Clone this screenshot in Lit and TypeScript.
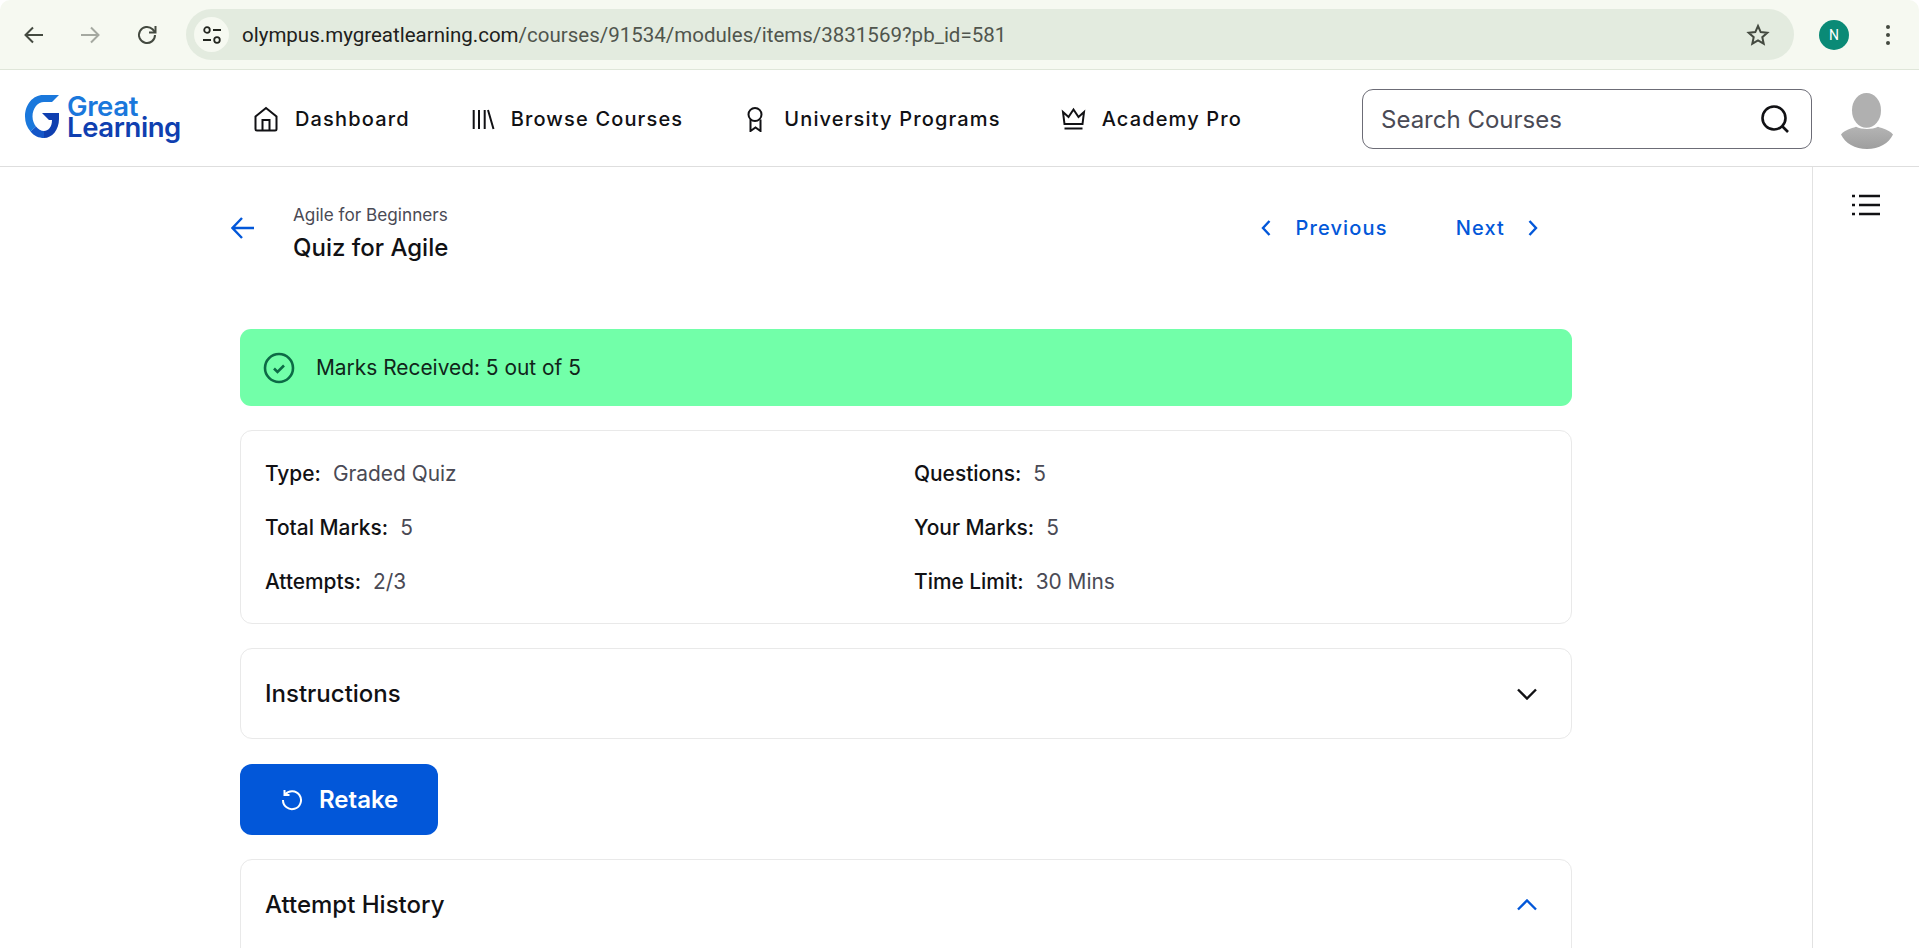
import { LitElement, html, css, svg } from 'lit';
import { customElement } from 'lit/decorators.js';

const navItems = [
  {
    label: 'Dashboard',
    icon: svg`<path d="M1.500 10.500 12 2l10.500 8.500V23a1.500 1.500 0 0 1-1.500 1.500H3A1.500 1.500 0 0 1 1.500 23z" /><path d="M8.500 24.500V14h7v10.500" />`,
  },
  {
    label: 'Browse Courses',
    icon: svg`<path d="M3.700 4v19M9 4v19M14.700 4v19M18 4l5.500 19" />`,
  },
  {
    label: 'University Programs',
    icon: svg`<circle cx="12" cy="8.500" r="6.500" /><path d="M7.500 13.500V25l5-3.500 5 3.500V13.500" />`,
  },
  {
    label: 'Academy Pro',
    icon: svg`<path d="M2 6l5.500 5 5-7.500 5 7.500 5.500-5-1.500 12H3.500z" /><path d="M3.500 22.500h18" />`,
  },
];

const rows = [
  ['Type:', 'Graded Quiz', 'Questions:', '5'],
  ['Total Marks:', '5', 'Your Marks:', '5'],
  ['Attempts:', '2/3', 'Time Limit:', '30 Mins'],
];

@customElement('app-root')
export class AppRoot extends LitElement {
  static styles = css`
    :host {
      display: block;
      height: 948px;
      overflow: hidden;
      background: #fff;
      font-family: 'Inter', sans-serif;
      color: #111114;
    }
    svg {
      display: block;
      fill: none;
      stroke: currentColor;
      flex: none;
    }
    svg.solid {
      stroke: none;
    }

    /* browser chrome */
    .toolbar {
      height: 70px;
      box-sizing: border-box;
      background: #f6f9f1;
      border-bottom: 1px solid #dfe6d9;
      border-radius: 10px 10px 0 0;
      display: flex;
      align-items: center;
      padding-left: 21.5px;
    }
    .tool {
      width: 24px;
      height: 24px;
      margin-right: 32px;
      color: #444a40;
      stroke-width: 2;
    }
    .tool.off {
      color: #a5a9a1;
      margin-right: 33px;
    }
    .tool.last {
      margin-right: 27.5px;
    }
    .pill {
      width: 1608px;
      height: 51px;
      box-sizing: border-box;
      border-radius: 26px;
      background: #e3ebdf;
      display: flex;
      align-items: center;
      padding: 0 24px 0 8px;
    }
    .tune {
      width: 35px;
      height: 35px;
      border-radius: 50%;
      background: #f6f9f1;
      display: flex;
      align-items: center;
      justify-content: center;
      margin-right: 13px;
      color: #23261f;
    }
    .url {
      flex: 1;
      font-family: 'Roboto', sans-serif;
      font-size: 20.5px;
      color: #50554d;
      white-space: nowrap;
    }
    .url b {
      font-weight: 400;
      color: #1e211c;
    }
    .star {
      color: #444a40;
    }
    .account {
      width: 30px;
      height: 30px;
      border-radius: 50%;
      background: #0a8a76;
      color: #fff;
      font-family: 'Roboto', sans-serif;
      font-size: 14px;
      display: flex;
      align-items: center;
      justify-content: center;
      margin-left: 25px;
    }
    .dots {
      display: flex;
      flex-direction: column;
      gap: 4px;
      margin-left: 37px;
    }
    .dots i {
      width: 4px;
      height: 4px;
      border-radius: 50%;
      background: #444a40;
    }

    /* site header */
    .header {
      height: 97px;
      box-sizing: border-box;
      border-bottom: 1px solid #dedede;
      display: flex;
      align-items: center;
      padding: 2px 0 0 25px;
    }
    .logo {
      display: flex;
      align-items: flex-start;
      gap: 8px;
      width: 229px;
      height: 48px;
    }
    .logo-text {
      font-weight: 600;
      font-size: 27.5px;
      line-height: 21px;
      letter-spacing: -0.4px;
      color: #0f3fb0;
      padding-top: 1px;
    }
    .logo-text span {
      display: block;
      color: #1a78dc;
    }
    .nav {
      display: flex;
      align-items: center;
    }
    .nav-item {
      display: flex;
      align-items: center;
      gap: 16px;
      margin-right: 60px;
      font-size: 20px;
      font-weight: 500;
      letter-spacing: 1.15px;
      white-space: nowrap;
    }
    .nav-item svg {
      width: 25px;
      height: 26px;
      stroke-width: 2;
    }
    .search {
      margin-left: auto;
      width: 450px;
      height: 60px;
      box-sizing: border-box;
      border: 1px solid #6c6c76;
      border-radius: 11px;
      display: flex;
      align-items: center;
      justify-content: space-between;
      padding: 0 21px 0 18px;
      font-size: 24px;
      color: #4a4a55;
    }
    .search svg {
      color: #111114;
      stroke-width: 2.6;
    }
    .avatar {
      margin: 4px 26px 0 29px;
    }

    /* body */
    .layout {
      display: flex;
      height: 781px;
    }
    .main {
      flex: none;
      width: 1813px;
      box-sizing: border-box;
      padding: 0 240px;
      border-right: 1px solid #e2e2e2;
    }
    .side {
      flex: 1;
      display: flex;
      justify-content: center;
      padding-top: 27px;
    }
    .top {
      height: 162px;
      display: flex;
      align-items: flex-start;
      padding-top: 37px;
      box-sizing: border-box;
    }
    .back {
      color: #0257d9;
      margin: 12px 0 0 -9px;
      stroke-width: 2.4;
    }
    .crumbs {
      margin-left: 38px;
    }
    .crumb {
      font-size: 17.2px;
      line-height: 22px;
      color: #4a4a55;
    }
    .title {
      font-size: 24px;
      font-weight: 500;
      line-height: 28px;
      margin-top: 8px;
    }
    .pager {
      margin: 12px 33px 0 auto;
      display: flex;
      align-items: center;
      color: #0257d9;
      font-size: 20px;
      line-height: 24px;
      font-weight: 500;
      letter-spacing: 1.15px;
    }
    .pager svg {
      stroke-width: 2.4;
    }
    .prev-text {
      margin: 0 68px 0 23px;
    }
    .next-text {
      margin-right: 22px;
    }
    .banner {
      height: 77px;
      box-sizing: border-box;
      background: #72ffa9;
      border-radius: 11px;
      display: flex;
      align-items: center;
      padding-left: 23px;
      gap: 21px;
      font-size: 20.9px;
      color: #10251a;
    }
    .banner svg {
      color: #0d6a46;
      stroke-width: 2.6;
    }
    .card {
      border: 1px solid #e9e9e9;
      border-radius: 12px;
      box-sizing: border-box;
    }
    .info {
      height: 194px;
      margin-top: 24px;
      padding: 15px 20px 15px 24px;
      display: grid;
      grid-template-columns: 649px 1fr;
      grid-auto-rows: 54px;
      align-items: center;
      font-size: 20.9px;
      color: #4a4a55;
    }
    .info strong {
      font-weight: 500;
      color: #111114;
      margin-right: 12px;
    }
    .accordion-head {
      height: 89px;
      display: flex;
      align-items: center;
      justify-content: space-between;
      padding: 0 34px 0 24px;
      font-size: 24px;
      font-weight: 500;
    }
    .instructions {
      margin-top: 24px;
    }
    .retake {
      margin-top: 25px;
      width: 198px;
      height: 71px;
      box-sizing: border-box;
      background: #0257d9;
      border-radius: 12px;
      color: #fff;
      display: flex;
      align-items: center;
      padding-left: 41px;
      gap: 16px;
      font-size: 24px;
      font-weight: 600;
    }
    .retake svg {
      stroke-width: 2;
    }
    .history {
      height: 200px;
      margin-top: 24px;
    }
    .history svg {
      color: #0257d9;
    }
  `;

  render() {
    return html`
      <div class="toolbar">
        <svg class="tool" viewBox="0 0 24 24"><path d="M21 12H4M11 4.500 3.500 12l7.500 7.500" /></svg>
        <svg class="tool off" viewBox="0 0 24 24"><path d="M3 12h17M13 4.500l7.500 7.500-7.500 7.500" /></svg>
        <svg class="tool last" viewBox="0 0 24 24">
          <path d="M20 12a8 8 0 1 1-2.400-5.700L20 9" /><path d="M20.500 3v6.500H14" />
        </svg>
        <div class="pill">
          <div class="tune">
            <svg width="20" height="20" viewBox="0 0 20 20" stroke-width="1.800">
              <circle cx="5" cy="5" r="2.800" /><path d="M11 5h8M1 15h8" /><circle cx="15" cy="15" r="2.800" />
            </svg>
          </div>
          <div class="url"><b>olympus.mygreatlearning.com</b>/courses/91534/modules/items/3831569?pb_id=581</div>
          <svg class="star" width="24" height="24" viewBox="0 0 24 24" stroke-width="2">
            <path d="M12 3l2.700 6.100 6.600.7-5 4.400 1.400 6.500L12 17.400l-5.700 3.300 1.400-6.500-5-4.400 6.600-.7z" />
          </svg>
        </div>
        <div class="account">N</div>
        <div class="dots"><i></i><i></i><i></i></div>
      </div>

      <header class="header">
        <div class="logo">
          <svg class="solid" width="34" height="43" viewBox="0 0 34 43">
            <path fill="#1a78dc" d="M18 0H34L27 7H19C13 7 7.500 13 7.500 21.500 7.500 25.500 9 29 11 31.500L5.500 36.500C2 32.500 0 27.500 0 21.500 0 9.500 8 0 18 0z" />
            <path fill="#1456c8" d="M5.500 36.500 11 31.500C13 34 16 36 19 36V43C14 43 9 41 5.500 36.500z" />
            <path fill="#0f3fb0" d="M17 18H34V24C34 35 27 43 19 43V36C23 36 27 32.500 27 25H24z" />
          </svg>
          <div class="logo-text"><span>Great</span>Learning</div>
        </div>
        <nav class="nav">
          ${navItems.map(
            (n) => html`<div class="nav-item"><svg viewBox="0 0 25 26">${n.icon}</svg>${n.label}</div>`
          )}
        </nav>
        <div class="search">
          Search Courses
          <svg width="30" height="30" viewBox="0 0 30 30">
            <circle cx="14" cy="14" r="11.500" /><path d="M22 22l6 6" />
          </svg>
        </div>
        <svg class="avatar solid" width="52" height="56" viewBox="0 0 52 58" preserveAspectRatio="none">
          <defs>
            <linearGradient id="av" x1="0" y1="0" x2="0" y2="1">
              <stop offset="0" stop-color="#b4b4b4" /><stop offset="1" stop-color="#9e9e9e" />
            </linearGradient>
          </defs>
          <ellipse cx="25.500" cy="18" rx="14.500" ry="18" fill="#b0b0b0" />
          <path fill="url(#av)" d="M15 35c-5 2-11 3-15 8 4 9 14 15 26 15s22-6 26-15c-4-5-10-6-15-8-6 3-16 3-22 0z" />
        </svg>
      </header>

      <div class="layout">
        <div class="main">
          <div class="top">
            <svg class="back" width="24" height="24" viewBox="0 0 24 24">
              <path d="M23 12H2M11 2 1.500 12 11 22" />
            </svg>
            <div class="crumbs">
              <div class="crumb">Agile for Beginners</div>
              <div class="title">Quiz for Agile</div>
            </div>
            <div class="pager">
              <svg width="12" height="18" viewBox="0 0 12 18"><path d="M9.500 2 3 9l6.500 7" /></svg>
              <span class="prev-text">Previous</span>
              <span class="next-text">Next</span>
              <svg width="12" height="18" viewBox="0 0 12 18"><path d="M2.500 2 9 9l-6.500 7" /></svg>
            </div>
          </div>

          <div class="banner">
            <svg width="32" height="32" viewBox="0 0 32 32">
              <circle cx="16" cy="16" r="14" /><path d="M11 16.500l3.500 3.500 6.500-6.500" />
            </svg>
            Marks Received: 5 out of 5
          </div>

          <div class="card info">
            ${rows.map(
              (r) => html`
                <div><strong>${r[0]}</strong>${r[1]}</div>
                <div><strong>${r[2]}</strong>${r[3]}</div>
              `
            )}
          </div>

          <div class="card instructions">
            <div class="accordion-head">
              Instructions
              <svg width="20" height="12" viewBox="0 0 20 12" stroke-width="2.400"><path d="M1 1.500l9 9 9-9" /></svg>
            </div>
          </div>

          <div class="retake">
            <svg width="22" height="22" viewBox="0 0 22 22">
              <path d="M4 5.500A9 9 0 1 1 2 11" /><path d="M3.500 1v5h5" />
            </svg>
            Retake
          </div>

          <div class="card history">
            <div class="accordion-head">
              Attempt History
              <svg width="20" height="12" viewBox="0 0 20 12" stroke-width="2.400"><path d="M1 10.500l9-9 9 9" /></svg>
            </div>
          </div>
        </div>
        <div class="side">
          <svg width="28" height="22" viewBox="0 0 28 22" stroke-width="2.600">
            <path d="M7 2h21M7 11h21M7 20h21M0 2h3M0 11h3M0 20h3" />
          </svg>
        </div>
      </div>
    `;
  }
}
